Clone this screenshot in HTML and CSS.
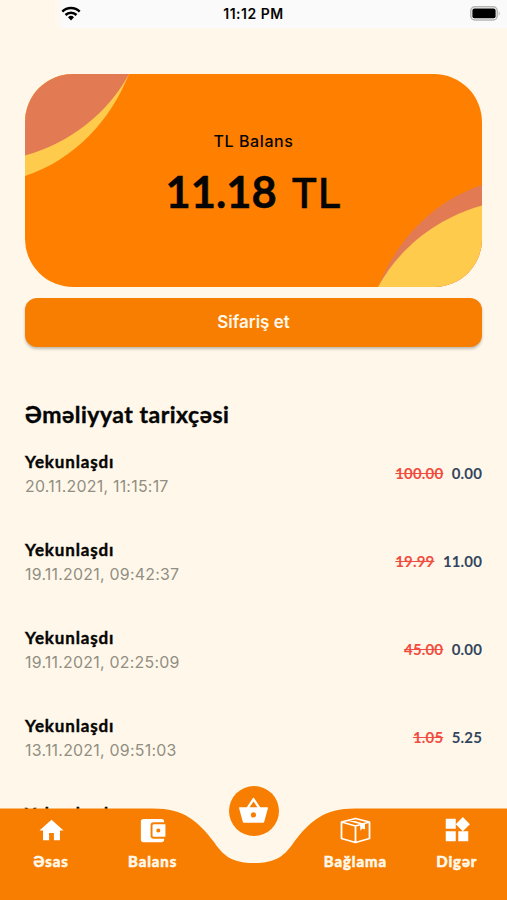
FILE: index.html
```html
<!DOCTYPE html>
<html lang="az">
  <head>
    <meta charset="UTF-8" />
    <meta name="viewport" content="width=device-width, initial-scale=1.0" />
    <title>TL Balans</title>
    <link rel="stylesheet" href="styles.css">
  </head>
  <body>
    <div class="app">
      <header class="status">
        <div class="status-left">
          <svg class="wifi" width="20" height="15" viewBox="0 0 20 15" fill="none" stroke="#000" stroke-width="2.5">
            <path d="M1.3 5.6a12.4 12.4 0 0 1 17.4 0" />
            <path d="M4.5 9a7.8 7.8 0 0 1 11 0" />
            <path d="M10 14.5l-3-3.2a4.3 4.3 0 0 1 6 0z" fill="#000" stroke="none" />
          </svg>
        </div>
        <span class="time">11:12 PM</span>
        <div class="status-right">
          <svg width="31" height="15" viewBox="0 0 31 15">
            <rect x="0.8" y="0.8" width="26.4" height="13.2" rx="4" fill="#fafafa" stroke="#b5b5b2" stroke-width="1.5" />
            <rect x="2.4" y="2.5" width="23.2" height="9.8" rx="2" fill="#000" />
            <path d="M28.7 5.2q2 2.2 0 4.6z" fill="#b5b5b2" />
          </svg>
        </div>
      </header>

      <main>
        <section class="card">
          <svg class="card-bg" viewBox="0 0 457 213" preserveAspectRatio="none">
            <path d="M0 0H104C86 45 51 85 0 102Z" fill="#ffcb4d" />
            <path d="M0 0H104C83 39 45 69 0 81.5Z" fill="#e27a53" />
            <path d="M457 213H353C371 168 406 128 457 111Z" fill="#e27a53" />
            <path d="M457 213H353C374 174 412 144 457 131.500Z" fill="#ffcb4d" />
          </svg>
          <p class="card-label">TL Balans</p>
          <p class="card-amount"><span class="digits">11.18</span><span class="currency">TL</span></p>
        </section>
        <button type="button" class="order">Sifariş et</button>

        <h1>Əməliyyat tarixçəsi</h1>
        <ul class="history">
          <li>
            <div><p class="name">Yekunlaşdı</p><p class="date">20.11.2021, 11:15:17</p></div>
            <p class="sums"><del>100.00</del><span>0.00</span></p>
          </li>
          <li>
            <div><p class="name">Yekunlaşdı</p><p class="date">19.11.2021, 09:42:37</p></div>
            <p class="sums"><del>19.99</del><span>11.00</span></p>
          </li>
          <li>
            <div><p class="name">Yekunlaşdı</p><p class="date">19.11.2021, 02:25:09</p></div>
            <p class="sums"><del>45.00</del><span>0.00</span></p>
          </li>
          <li>
            <div><p class="name">Yekunlaşdı</p><p class="date">13.11.2021, 09:51:03</p></div>
            <p class="sums"><del>1.05</del><span>5.25</span></p>
          </li>
          <li>
            <div><p class="name">Yekunlaşdı</p></div>
          </li>
        </ul>
      </main>

      <nav class="tabs">
        <svg class="tabs-bg" viewBox="0 0 507 92">
          <path d="M0 .5H153C184 .5 198 13 214 34C223 47 231 55 254 55C277 55 285 47 294 34C310 13 324 .5 355 .5H507V92H0Z" fill="#f77e00" />
        </svg>
        <a class="tab">
          <svg width="29" height="29" viewBox="0 0 24 24" fill="#fff"><path d="M10 20v-6h4v6h5v-8h3L12 3 2 12h3v8z" /></svg>
          <span>Əsas</span>
        </a>
        <a class="tab">
          <svg width="31" height="31" viewBox="0 0 24 24" fill="#fff">
            <path d="M19 3H5a2 2 0 0 0-2 2v14a2 2 0 0 0 2 2h14a2 2 0 0 0 2-2v-.7h-8a2.500 2.500 0 0 1-2.500-2.500V8.200A2.500 2.500 0 0 1 13 5.700h8V5a2 2 0 0 0-2-2z" />
            <path fill-rule="evenodd" d="M13 7.200h9v9.600h-9a1 1 0 0 1-1-1V8.200a1 1 0 0 1 1-1zM16.500 10.400a1.600 1.600 0 1 0 0 3.200 1.600 1.600 0 0 0 0-3.200z" />
          </svg>
          <span>Balans</span>
        </a>
        <a class="fab">
          <svg width="31" height="32" viewBox="0 0 24 24" fill="#fff">
            <path d="M17.210 9l-4.380-6.560a1 1 0 0 0-1.660 0L6.790 9H1.500a.7.7 0 0 0-.6 1L3.700 20.300a1 1 0 0 0 .9.700h14.800a1 1 0 0 0 .9-.7L23.100 10a.7.7 0 0 0-.6-1zM9 9l3-4.400L15 9zm3 8a2 2 0 1 1 0-4 2 2 0 0 1 0 4z" />
          </svg>
        </a>
        <a class="tab">
          <svg width="31" height="27" viewBox="0 0 31 27" fill="none" stroke="#fff" stroke-width="1.800" stroke-linejoin="round">
            <path d="M1.500 5L15.500 1.500 29.500 5V21.500L15.500 25.500 1.500 21.500ZM1.500 5L15.500 9 29.500 5M15.500 9V25.500M8.500 3.200L22.500 7" />
            <path d="M20 8L25 6.300V12.500L22.500 11.500 20.500 13.800Z" fill="#fff" stroke="none" />
          </svg>
          <span>Bağlama</span>
        </a>
        <a class="tab">
          <svg width="30" height="30" viewBox="0 0 24 24" fill="#fff"><path d="M13 13v8h8v-8zM3 21h8v-8H3zM3 3v8h8V3zm13.660-1.310L11 7.340 16.660 13l5.660-5.660z" /></svg>
          <span>Digər</span>
        </a>
      </nav>
    </div>
  </body>
</html>
```
FILE: styles.css
```css
* {
    box-sizing: border-box;
}

body {
    margin: 0;
    font-family: Inter, sans-serif;
    background-color: #fff8ea;
    color: #050505;
}

p,
ul,
h1 {
    margin: 0;
    padding: 0;
}

.app {
    display: flex;
    flex-direction: column;
    height: 900px;
    overflow: hidden;
}

/* Barra de estado */
.status {
    display: grid;
    grid-template-columns: 1fr auto 1fr;
    align-items: center;
    flex: none;
    height: 28px;
    padding-bottom: 2px;
    background: linear-gradient(90deg, #fff8ea 55px, #fafafa 64px);
}

.status svg {
    display: block;
}

.status-left {
    padding-left: 61px;
}

.status-right {
    display: flex;
    justify-content: flex-end;
    padding-right: 6px;
}

.time {
    font-size: 14px;
    font-weight: 600;
    letter-spacing: 0.5px;
}

main {
    flex: 1;
    min-height: 0;
    padding: 46px 25px 0;
}

/* Tarjeta de saldo */
.card {
    position: relative;
    height: 213px;
    padding-top: 56px;
    border-radius: 48px;
    background-color: #ff8000;
    overflow: hidden;
    text-align: center;
}

.card-bg {
    position: absolute;
    top: 0;
    left: 0;
    width: 100%;
    height: 100%;
}

.card-label {
    position: relative;
    font-size: 16px;
    line-height: 22px;
    font-weight: 500;
    letter-spacing: 0.6px;
}

.card-amount {
    position: relative;
    display: flex;
    justify-content: center;
    align-items: baseline;
    gap: 14px;
    margin-top: 12px;
    line-height: 54px;
}

.digits {
    font-family: Lato, sans-serif;
    font-size: 43.5px;
    font-weight: 700;
    -webkit-text-stroke: 0.5px;
}

.currency {
    font-size: 41.5px;
    font-weight: 500;
    -webkit-text-stroke: 0.5px;
}

.order {
    display: block;
    width: 100%;
    height: 49px;
    margin-top: 11px;
    padding-bottom: 3px;
    border: 0;
    border-radius: 12px;
    background-color: #f77e00;
    box-shadow: 0 2px 3px rgba(0, 0, 0, 0.25);
    color: #fff8ea;
    font-family: Inter, sans-serif;
    font-size: 17px;
    font-weight: 600;
}

/* Historial */
h1 {
    margin-top: 51px;
    font-family: Lato, "Open Sans", sans-serif;
    font-size: 23px;
    line-height: 32px;
    font-weight: 700;
    letter-spacing: 0.5px;
    -webkit-text-stroke: 0.4px;
}

.history {
    margin-top: 20px;
    list-style: none;
}

.history li {
    display: flex;
    justify-content: space-between;
    height: 88px;
}

.name {
    font-family: Lato, "Open Sans", sans-serif;
    font-size: 17px;
    line-height: 24px;
    font-weight: 700;
    letter-spacing: 0.85px;
    -webkit-text-stroke: 0.4px;
}

.date {
    font-size: 15.9px;
    line-height: 25px;
    letter-spacing: 0.25px;
    color: #918e83;
}

.sums {
    display: flex;
    gap: 8.5px;
    padding-top: 11px;
    font-family: Lato, sans-serif;
    font-size: 15px;
    line-height: 24px;
    font-weight: 700;
    letter-spacing: 0.15px;
    color: #33455e;
}

.sums del {
    color: #f14c40;
}

/* Navegacion inferior */
.tabs {
    position: relative;
    display: grid;
    grid-template-columns: repeat(5, 1fr);
    flex: none;
    height: 92px;
}

.tabs-bg {
    position: absolute;
    top: 0;
    left: 0;
    width: 100%;
    height: 92px;
}

.tab {
    position: relative;
    display: grid;
    grid-template-rows: 30px 24px;
    row-gap: 4px;
    justify-items: center;
    align-items: center;
    align-content: start;
    padding-top: 7px;
    padding-left: 1px;
    color: #fff8ea;
    font-family: Lato, "Open Sans", sans-serif;
    font-size: 15px;
    line-height: 24px;
    font-weight: 700;
    letter-spacing: 0.9px;
    -webkit-text-stroke: 0.6px;
}

.fab {
    position: relative;
    top: -22px;
    display: flex;
    align-items: center;
    justify-content: center;
    justify-self: center;
    width: 50px;
    height: 50px;
    margin-left: 1px;
    border-radius: 50%;
    background-color: #f77e00;
}
```
